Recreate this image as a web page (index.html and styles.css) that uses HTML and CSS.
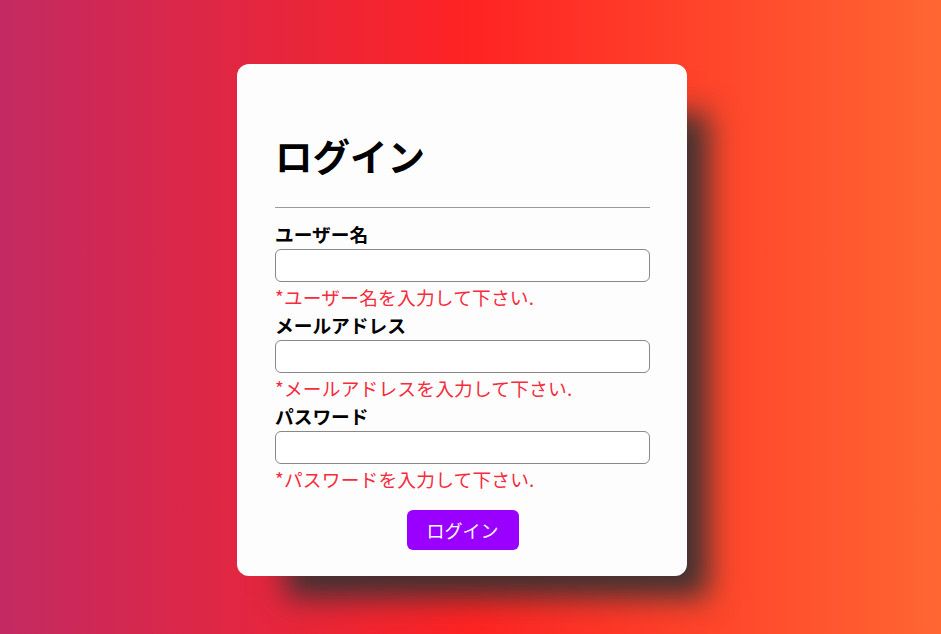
FILE: index.html
```html
<!DOCTYPE html>
<html lang="ja">
<head>
<meta charset="utf-8">
<title>ログイン</title>
<link rel="stylesheet" href="styles.css">
</head>
<body>
<main class="page">
  <form class="card">
    <h1 class="title">ログイン</h1>
    <hr class="rule">
    <div class="field">
      <label class="label">ユーザー名</label>
      <input class="input" type="text">
      <p class="error">*ユーザー名を入力して下さい.</p>
    </div>
    <div class="field">
      <label class="label">メールアドレス</label>
      <input class="input" type="email">
      <p class="error">*メールアドレスを入力して下さい.</p>
    </div>
    <div class="field">
      <label class="label">パスワード</label>
      <input class="input" type="password">
      <p class="error">*パスワードを入力して下さい.</p>
    </div>
    <div class="actions">
      <button class="btn" type="button">ログイン</button>
    </div>
  </form>
</main>
</body>
</html>
```
FILE: styles.css
```css
* { box-sizing: border-box; }
html, body { margin: 0; height: 100%; }
body {
  font-family: "Noto Sans CJK JP", "Noto Sans", sans-serif;
  background: linear-gradient(90deg, #c32a62 0%, #ff2323 50%, #ff6632 100%);
  overflow: hidden;
}
.page {
  display: flex;
  justify-content: center;
  align-items: flex-start;
  padding: 64px 17px 0 0;
  height: 100%;
}
.card {
  width: 450px;
  height: 512px;
  background: #fdfdfd;
  border-radius: 12px;
  padding: 69px 37px 0 38px;
  box-shadow: 35px 35px 28px -14px rgba(52, 50, 50, 0.95);
}
.title {
  margin: 0;
  font-size: 37.5px;
  line-height: 44px;
  font-weight: 700;
  color: #000;
}
.rule {
  margin: 30px 0 0;
  border: 0;
  border-top: 1px solid #9a9a9a;
}
.field {
  display: flex;
  flex-direction: column;
}
.field:first-of-type { margin-top: 12px; }
.label {
  font-size: 18.72px;
  line-height: 27px;
  font-weight: 700;
  color: #000;
  margin-bottom: 2px;
}
.input {
  height: 33px;
  border: 1px solid #888;
  border-radius: 6px;
  background: #fff;
  font: inherit;
  padding: 0 8px;
}
.error {
  margin: 1px 0 0;
  font-size: 18.72px;
  line-height: 28px;
  color: #f52c3c;
  letter-spacing: 0.2px;
}
.actions {
  display: flex;
  justify-content: center;
  margin-top: 17px;
}
.btn {
  width: 112px;
  height: 40px;
  border: 0;
  border-radius: 6px;
  background: #9a00ff;
  color: #fff;
  font-family: inherit;
  font-size: 18px;
  cursor: pointer;
}
```
